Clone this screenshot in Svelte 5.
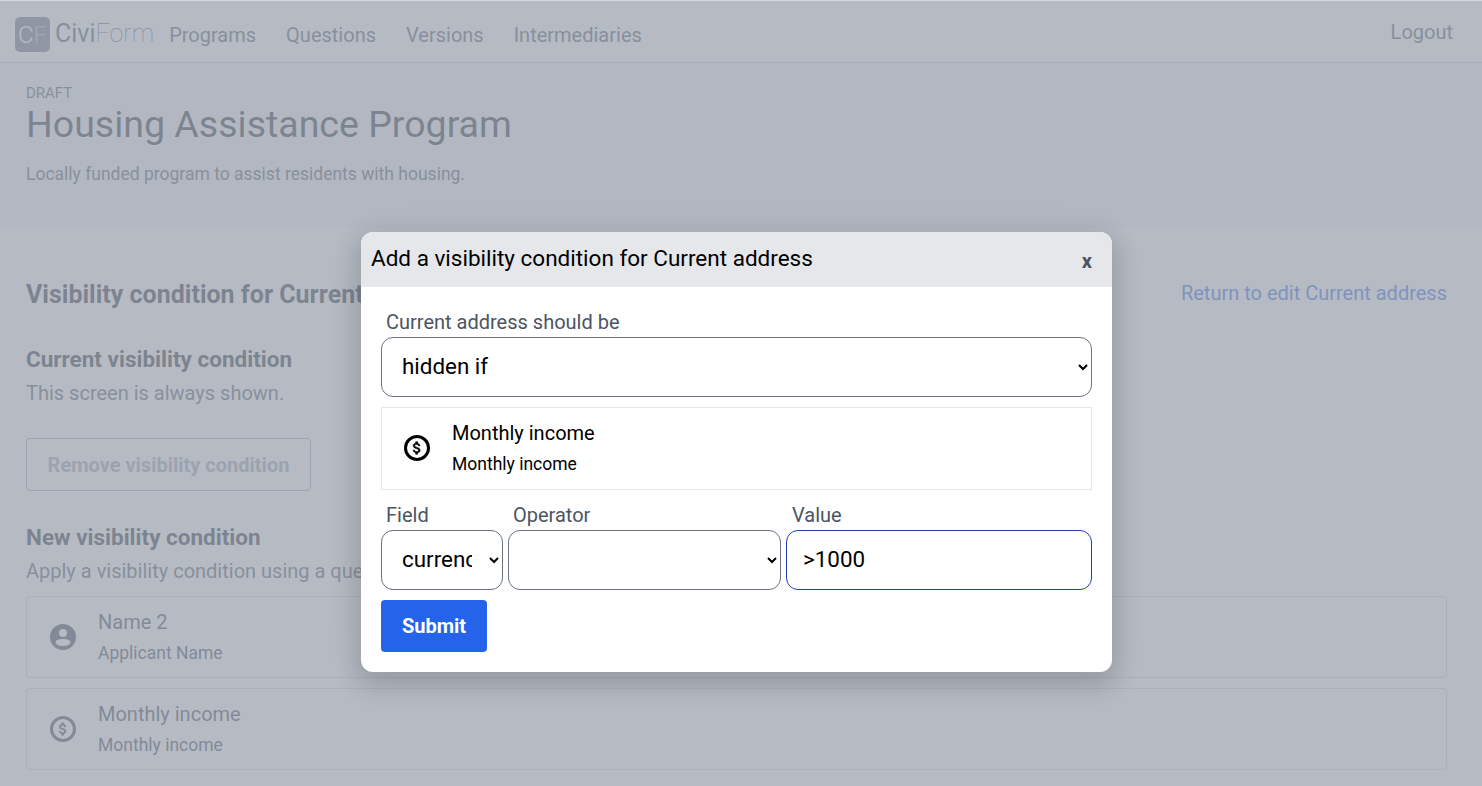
<script>
  let shouldBe = 'hidden if'
  let field = 'currency'
  let value = '>1000'
  const navLinks = ['Programs', 'Questions', 'Versions', 'Intermediaries']
  const dollar = 'M11.8 10.9c-2.27-.59-3-1.2-3-2.15 0-1.09 1.01-1.85 2.7-1.85 1.78 0 2.44.85 2.5 2.1h2.21c-.07-1.72-1.12-3.3-3.21-3.81V3h-3v2.16c-1.94.42-3.5 1.68-3.5 3.61 0 2.31 1.91 3.46 4.7 4.13 2.5.6 3 1.48 3 2.41 0 .69-.49 1.79-2.7 1.79-2.06 0-2.87-.92-2.98-2.1h-2.2c.12 2.19 1.76 3.42 3.68 3.83V21h3v-2.15c1.95-.37 3.5-1.5 3.5-3.55 0-2.84-2.43-3.81-4.7-4.4z'
</script>

<div class="page">
  <nav class="nav">
    <div class="logo">
      <span class="logo-box">C<span class="faint">F</span></span>
      <span class="logo-text">Civi<span class="thin">Form</span></span>
    </div>
    {#each navLinks as link}
      <span class="nav-link">{link}</span>
    {/each}
    <span class="logout">Logout</span>
  </nav>

  <header class="head">
    <div class="draft">DRAFT</div>
    <h1>Housing Assistance Program</h1>
    <p>Locally funded program to assist residents with housing.</p>
  </header>

  <main class="content">
    <div class="title-row">
      <h2>Visibility condition for Current address</h2>
      <span class="return">Return to edit Current address</span>
    </div>
    <h3>Current visibility condition</h3>
    <div class="muted">This screen is always shown.</div>
    <button class="remove">Remove visibility condition</button>
    <h3 class="new">New visibility condition</h3>
    <div class="muted">Apply a visibility condition using a question below.</div>
    <div class="card first">
      <svg class="icon" viewBox="0 0 26 26">
        <path fill-rule="evenodd" d="M13 0a13 13 0 1 0 0 26a13 13 0 1 0 0-26zM13 5a4 4 0 1 1 0 8a4 4 0 1 1 0-8zM13 15c4 0 7.500 1.200 7.500 3.200c0 2-3.500 3.800-7.500 3.800s-7.500-1.800-7.500-3.800c0-2 3.500-3.200 7.500-3.200z" />
      </svg>
      <div>
        <div class="card-name">Name 2</div>
        <div class="card-desc">Applicant Name</div>
      </div>
    </div>
    <div class="card">
      <svg class="icon" viewBox="0 0 26 26">
        <circle cx="13" cy="13" r="11.500" fill="none" stroke="currentColor" stroke-width="3" />
        <path class="glyph" d={dollar} transform="translate(4.600 4.600) scale(.7)" />
      </svg>
      <div>
        <div class="card-name">Monthly income</div>
        <div class="card-desc">Monthly income</div>
      </div>
    </div>
  </main>

  <div class="overlay">
    <div class="modal">
      <div class="modal-head">
        <span>Add a visibility condition for Current address</span>
        <span class="close">x</span>
      </div>
      <div class="modal-body">
        <label class="lbl" for="should">Current address should be</label>
        <select id="should" bind:value={shouldBe}>
          <option>hidden if</option>
          <option>shown if</option>
        </select>
        <div class="question">
          <svg class="icon" viewBox="0 0 26 26">
            <circle cx="13" cy="13" r="11.500" fill="none" stroke="currentColor" stroke-width="3" />
            <path class="glyph" d={dollar} transform="translate(4.600 4.600) scale(.7)" />
          </svg>
          <div>
            <div class="card-name">Monthly income</div>
            <div class="card-desc">Monthly income</div>
          </div>
        </div>
        <div class="fields">
          <div class="f-field">
            <label class="lbl" for="field">Field</label>
            <select id="field" bind:value={field}>
              <option>currency</option>
            </select>
          </div>
          <div class="f-op">
            <label class="lbl" for="op">Operator</label>
            <select id="op">
              <option></option>
            </select>
          </div>
          <div class="f-val">
            <label class="lbl val-lbl" for="val">Value</label>
            <input id="val" bind:value />
          </div>
        </div>
        <button class="submit">Submit</button>
      </div>
    </div>
  </div>
</div>

<style>
  :global(body) {
    margin: 0;
    font-family: Roboto, "Liberation Sans", sans-serif;
    overflow: hidden;
    background: #fff;
  }
  .page {
    position: relative;
    height: 786px;
    overflow: hidden;
    color: #374151;
  }
  .nav {
    display: flex;
    align-items: center;
    height: 62px;
    border-bottom: 1px solid #d1d5db;
    padding: 0 29px 0 15px;
  }
  .logo {
    display: flex;
    align-items: center;
    gap: 5px;
    margin-right: 15px;
    height: 48px;
  }
  .logo-box {
    width: 35px;
    height: 35px;
    border-radius: 5px;
    background: #6b7280;
    color: #fff;
    font-size: 24px;
    font-weight: 300;
    display: flex;
    align-items: center;
    justify-content: center;
    margin-top: 7px;
  }
  .faint {
    opacity: .5;
  }
  .logo-text {
    font-size: 25px;
    color: #4b5563;
    margin-top: 4px;
  }
  .thin {
    font-weight: 100;
  }
  .nav-link {
    font-size: 20px;
    color: #4b5563;
    margin-right: 30px;
    margin-top: 8px;
  }
  .logout {
    margin-left: auto;
    font-size: 20px;
    color: #4b5563;
    margin-top: 2px;
  }
  .head {
    background: #f3f4f6;
    height: 165px;
    padding: 22px 26px 0;
    box-sizing: border-box;
  }
  .draft {
    font-size: 15px;
    color: #4b5563;
    line-height: 16px;
  }
  h1 {
    margin: 0;
    font-size: 37.500px;
    font-weight: 400;
    line-height: 46px;
    color: #1f2937;
  }
  .head p {
    margin: 17px 0 0;
    font-size: 17.500px;
    color: #4b5563;
  }
  .content {
    padding: 0 35px 0 26px;
  }
  .title-row {
    display: flex;
    justify-content: space-between;
    align-items: center;
    padding-top: 51px;
  }
  h2 {
    margin: 0;
    font-size: 25px;
    font-weight: 700;
    color: #1f2937;
    line-height: 32px;
  }
  .return {
    font-size: 20px;
    color: #2563eb;
    margin-top: -4px;
  }
  h3 {
    margin: 34px 0 0;
    font-size: 22.500px;
    font-weight: 700;
    line-height: 28px;
    color: #1f2937;
  }
  .muted {
    font-size: 20px;
    line-height: 28px;
    margin-top: 6px;
    color: #4b5563;
  }
  .remove {
    display: block;
    margin-top: 31px;
    width: 285px;
    height: 53px;
    background: #fff;
    border: 1px solid #9ca3af;
    border-radius: 4px;
    color: #9ca3af;
    font: 700 20px Roboto, sans-serif;
  }
  .new {
    margin-top: 32px;
  }
  .card {
    display: flex;
    align-items: center;
    height: 82px;
    box-sizing: border-box;
    border: 1px solid #d1d5db;
    border-radius: 4px;
    margin-top: 10px;
    padding: 0 0 1px 23px;
    gap: 22px;
    color: #374151;
  }
  .card .icon {
    margin-top: 1px;
  }
  .first {
    margin-top: 11px;
  }
  .icon {
    width: 26px;
    height: 26px;
    flex: none;
    fill: currentColor;
  }
  .glyph {
    stroke: currentColor;
    stroke-width: .7;
  }
  .card-name {
    font-size: 20px;
    line-height: 28px;
  }
  .card-desc {
    font-size: 17.500px;
    line-height: 24px;
    margin-top: 5px;
  }
  .overlay {
    position: absolute;
    inset: 0;
    background: rgba(156, 163, 175, .75);
    border-top: 1px solid #d8dade;
    display: flex;
    justify-content: center;
    padding: 231px 9px 0 0;
  }
  .modal {
    width: 751px;
    height: 440px;
    background: #fff;
    border-radius: 12px;
    box-shadow: 0 10px 25px 5px rgba(0, 0, 0, .14), 0 0 40px rgba(0, 0, 0, .04);
    overflow: hidden;
    color: #000;
  }
  .modal-head {
    height: 55px;
    box-sizing: border-box;
    background: #e5e7eb;
    display: flex;
    align-items: center;
    justify-content: space-between;
    padding: 0 20px 3px 10px;
    font-size: 22.500px;
  }
  .close {
    font-size: 20px;
    font-weight: 700;
    color: #4b5563;
    margin-top: 5px;
  }
  .modal-body {
    padding: 26px 20px 20px;
  }
  .lbl {
    display: block;
    padding-left: 5px;
    font-size: 20px;
    line-height: 28px;
    height: 28px;
    color: #4b5563;
    margin-top: -5px;
    margin-bottom: 1px;
  }
  .val-lbl {
    padding-left: 6px;
  }
  select, input {
    display: block;
    box-sizing: border-box;
    width: 100%;
    height: 60px;
    border: 1px solid #6b7280;
    border-radius: 12px;
    background: #fff;
    color: #000;
    font: 22.400px Roboto, sans-serif;
    padding: 0 14px 2px 16px;
    margin: 0;
    outline: none;
  }
  input {
    border-color: #1e40af;
  }
  .question {
    display: flex;
    align-items: center;
    height: 83px;
    box-sizing: border-box;
    border: 1px solid #e5e7eb;
    margin-top: 10px;
    padding: 0 0 2px 22px;
    gap: 22px;
  }
  .fields {
    display: flex;
    gap: 5px;
    margin-top: 16px;
  }
  .f-field {
    width: 122px;
    flex: none;
  }
  .f-op {
    width: 273px;
    flex: none;
  }
  .f-val {
    flex: 1;
  }
  .submit {
    display: block;
    margin-top: 10px;
    width: 106px;
    height: 52px;
    background: #2563eb;
    color: #fff;
    border: none;
    border-radius: 4px;
    font: 700 20px Roboto, sans-serif;
  }
</style>
